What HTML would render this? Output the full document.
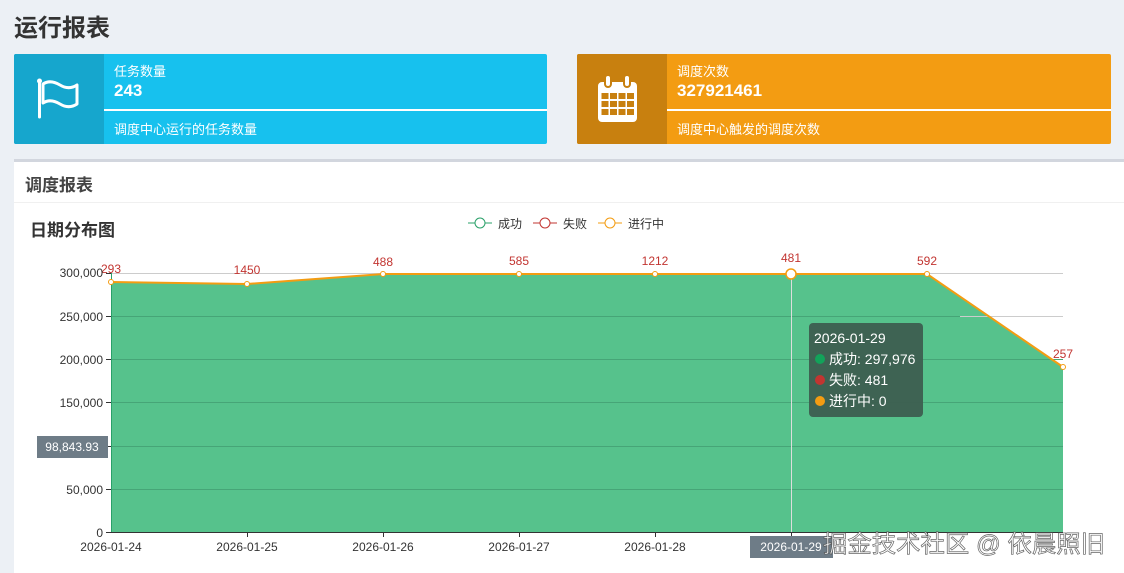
<!DOCTYPE html>
<html><head><meta charset="utf-8"><style>
*{margin:0;padding:0;box-sizing:border-box}
body{width:1124px;height:573px;overflow:hidden;background:#ecf0f5;font-family:"Liberation Sans","Noto Sans CJK SC",sans-serif;position:relative}
.abs{position:absolute}
h1{position:absolute;left:14px;top:8px;font-size:24px;font-weight:bold;color:#333}
.card{position:absolute;top:54px;height:90px;border-radius:2px;overflow:hidden;color:#fff}
.card .ic{position:absolute;left:0;top:0;width:90px;height:90px}
.card .t1{position:absolute;left:100px;top:7px;font-size:13px}
.card .t2{position:absolute;left:100px;top:27px;font-size:17px;font-weight:bold}
.card .ln{position:absolute;left:90px;right:0;top:55px;height:2px;background:#fff}
.card .t3{position:absolute;left:100px;top:65px;font-size:13px}
</style></head><body>
<h1>运行报表</h1>
<div class="card" style="left:14px;width:533px;background:#17c1ee">
 <div class="ic" style="background:#16a6cd">
  <svg width="90" height="90" viewBox="0 0 90 90"><g fill="none" stroke="#fff" stroke-width="3" stroke-linecap="round" stroke-linejoin="round"><line x1="25.5" y1="27" x2="25.5" y2="63"/><path d="M29 30c6-4 12-2 17 1s11 4 17 0v19c-6 4-12 3-17 0s-11-5-17-1z"/></g><circle cx="25.5" cy="27" r="2.5" fill="#fff"/></svg>
 </div>
 <div class="t1">任务数量</div><div class="t2">243</div><div class="ln"></div><div class="t3">调度中心运行的任务数量</div>
</div>
<div class="card" style="left:577px;width:534px;background:#f39c12">
 <div class="ic" style="background:#c8800f">
  <svg width="90" height="90" viewBox="0 0 90 90"><rect x="21" y="28" width="39" height="40" rx="4" fill="#fff"/><g fill="#c8800f"><rect x="24.5" y="39" width="7" height="6"/><rect x="33" y="39" width="7" height="6"/><rect x="41.5" y="39" width="7" height="6"/><rect x="50" y="39" width="7" height="6"/><rect x="24.5" y="47" width="7" height="6"/><rect x="33" y="47" width="7" height="6"/><rect x="41.5" y="47" width="7" height="6"/><rect x="50" y="47" width="7" height="6"/><rect x="24.5" y="55" width="7" height="6"/><rect x="33" y="55" width="7" height="6"/><rect x="41.5" y="55" width="7" height="6"/><rect x="50" y="55" width="7" height="6"/><rect x="27" y="24" width="8" height="10" rx="4"/><rect x="46" y="24" width="8" height="10" rx="4"/></g><rect x="29" y="22" width="4" height="10" rx="2" fill="#fff"/><rect x="48" y="22" width="4" height="10" rx="2" fill="#fff"/></svg>
 </div>
 <div class="t1">调度次数</div><div class="t2">327921461</div><div class="ln"></div><div class="t3">调度中心触发的调度次数</div>
</div>
<div class="abs" style="left:14px;top:159px;right:0;bottom:0;background:#fff;border-top:3px solid #d2d6de"></div>
<div class="abs" style="left:25px;top:171px;font-size:17px;font-weight:bold;color:#444">调度报表</div>
<div class="abs" style="left:14px;top:202px;right:0;height:1px;background:#f0f0f0"></div>
<div class="abs" style="left:30px;top:216px;font-size:17px;font-weight:bold;color:#333">日期分布图</div>
<svg class="abs" style="left:0;top:0" width="1124" height="573" viewBox="0 0 1124 573" font-family="Liberation Sans, Noto Sans CJK SC, sans-serif">
 <g font-size="12" fill="#333">
  <line x1="468" y1="223" x2="492" y2="223" stroke="#2aa069"/><circle cx="480" cy="223" r="5" fill="#fff" stroke="#2aa069"/><text x="498" y="228">成功</text>
  <line x1="533" y1="223" x2="557" y2="223" stroke="#c23531"/><circle cx="545" cy="223" r="5" fill="#fff" stroke="#c23531"/><text x="563" y="228">失败</text>
  <line x1="598" y1="223" x2="622" y2="223" stroke="#f39c12"/><circle cx="610" cy="223" r="5" fill="#fff" stroke="#f39c12"/><text x="628" y="228">进行中</text>
 </g>
 <path d="M111 282 L247 284 L383 274 L519 274 L655 274 L791 274 L927 274 L1063 367 L1063 532 L111 532Z" fill="#56c28c"/>
 <g stroke="#46a577" stroke-width="1"><line x1="111" y1="316.5" x2="1063" y2="316.5"/><line x1="111" y1="359.5" x2="1063" y2="359.5"/><line x1="111" y1="402.5" x2="1063" y2="402.5"/><line x1="111" y1="446.5" x2="1063" y2="446.5"/><line x1="111" y1="489.5" x2="1063" y2="489.5"/></g>
 <g stroke="#ccc"><line x1="111" y1="273.5" x2="1063" y2="273.5"/><line x1="960" y1="316.5" x2="1063" y2="316.5"/></g>
 <line x1="111.5" y1="273" x2="111.5" y2="532" stroke="#2aa069"/>
 <line x1="111" y1="532.5" x2="1063" y2="532.5" stroke="#333"/>
 <g stroke="#333"><line x1="106" y1="273.5" x2="111" y2="273.5"/><line x1="106" y1="316.5" x2="111" y2="316.5"/><line x1="106" y1="359.5" x2="111" y2="359.5"/><line x1="106" y1="402.5" x2="111" y2="402.5"/><line x1="106" y1="446.5" x2="111" y2="446.5"/><line x1="106" y1="489.5" x2="111" y2="489.5"/><line x1="106" y1="532.5" x2="111" y2="532.5"/>
 <line x1="247.5" y1="532" x2="247.5" y2="537"/><line x1="383.5" y1="532" x2="383.5" y2="537"/><line x1="519.5" y1="532" x2="519.5" y2="537"/><line x1="655.5" y1="532" x2="655.5" y2="537"/><line x1="791.5" y1="532" x2="791.5" y2="537"/><line x1="927.5" y1="532" x2="927.5" y2="537"/></g>
 <line x1="791.5" y1="274" x2="791.5" y2="532" stroke="#ddd"/>
 <path d="M111 282 L247 284 L383 274 L519 274 L655 274 L791 274 L927 274 L1063 367" fill="none" stroke="#f39c12" stroke-width="2"/>
 <g fill="#fff" stroke="#f39c12"><circle cx="111" cy="282" r="2.5"/><circle cx="247" cy="284" r="2.5"/><circle cx="383" cy="274" r="2.5"/><circle cx="519" cy="274" r="2.5"/><circle cx="655" cy="274" r="2.5"/><circle cx="791" cy="274" r="5" stroke-width="1.5"/><circle cx="927" cy="274" r="2.5"/><circle cx="1063" cy="367" r="2.5"/></g>
 <g font-size="12" fill="#c23531" text-anchor="middle"><text x="111" y="273">293</text><text x="247" y="274">1450</text><text x="383" y="266">488</text><text x="519" y="265">585</text><text x="655" y="265">1212</text><text x="791" y="262">481</text><text x="927" y="265">592</text><text x="1063" y="358">257</text></g>
 <g font-size="12" fill="#333" text-anchor="end"><text x="103" y="277">300,000</text><text x="103" y="321">250,000</text><text x="103" y="364">200,000</text><text x="103" y="407">150,000</text><text x="103" y="494">50,000</text><text x="103" y="537">0</text></g>
 <g font-size="12" fill="#333" text-anchor="middle"><text x="111" y="551">2026-01-24</text><text x="247" y="551">2026-01-25</text><text x="383" y="551">2026-01-26</text><text x="519" y="551">2026-01-27</text><text x="655" y="551">2026-01-28</text><text x="927" y="551" fill="#fff">2026-01-30</text></g>
 <rect x="37" y="436" width="71" height="22" fill="#6e7c87"/><text x="72" y="451" font-size="12" fill="#fff" text-anchor="middle">98,843.93</text>
 <rect x="750" y="536" width="83" height="22" fill="#6e7c87"/><text x="791" y="551" font-size="12" fill="#fff" text-anchor="middle">2026-01-29</text>
 <rect x="809" y="323" width="114" height="94" rx="4" fill="#3d5e50" opacity="0.95"/>
 <g font-size="14" fill="#fff"><text x="814" y="343">2026-01-29</text>
  <circle cx="820" cy="359" r="5" fill="#12a35a"/><text x="829" y="364">成功: 297,976</text>
  <circle cx="820" cy="380" r="5" fill="#c23531"/><text x="829" y="385">失败: 481</text>
  <circle cx="820" cy="401" r="5" fill="#f39c12"/><text x="829" y="406">进行中: 0</text></g>
 <text x="823" y="552" font-size="24" textLength="282" lengthAdjust="spacingAndGlyphs" fill="#fff" stroke="#555" stroke-width="0.7" opacity="0.9">掘金技术社区 @ 依晨照旧</text>
</svg>
</body></html>
